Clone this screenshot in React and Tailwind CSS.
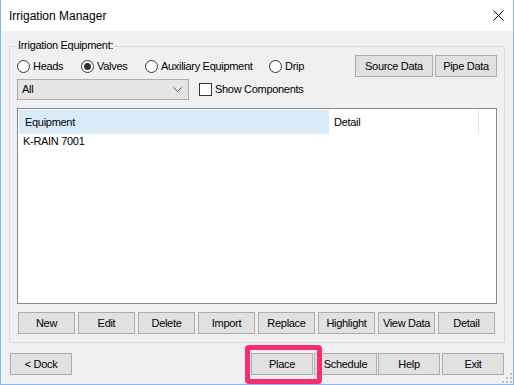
import React from "react";

const Btn = ({ children, className = "" }) => (
  <div
    className={
      "h-[22px] flex items-center justify-center bg-[#e1e1e1] border border-[#adadad] text-[11px] text-black " +
      className
    }
  >
    {children}
  </div>
);

const Radio = ({ label, checked, className = "" }) => (
  <div className={"flex items-center " + className}>
    <div className="w-[13px] h-[13px] rounded-full border border-[#333333] bg-white flex items-center justify-center shrink-0">
      {checked && <div className="w-[7px] h-[7px] rounded-full bg-[#333333]" />}
    </div>
    <span className="ml-[3px]">{label}</span>
  </div>
);

export default function App() {
  return (
    <div className="w-[514px] h-[385px] bg-[#f0f0f0] border-x border-b border-[#8ab6e8] flex flex-col font-['Liberation_Sans',Arial,sans-serif] text-[11px] tracking-[-0.3px] text-black relative overflow-hidden">
      {/* Title bar */}
      <div className="h-[31px] bg-white flex items-center justify-between pl-[8px] pr-[9px] shrink-0">
        <span className="text-[12px] tracking-normal">Irrigation Manager</span>
        <svg width="11" height="11" viewBox="0 0 11 11">
          <path d="M0.5 0.5 L10.5 10.5 M10.5 0.5 L0.5 10.5" stroke="#000" strokeWidth="1" />
        </svg>
      </div>

      {/* Group box */}
      <div className="relative mt-[15px] ml-[8px] w-[496px] h-[297px] border border-[#dcdcdc] rounded-[2px] flex flex-col shrink-0">
        <span className="absolute left-[7px] top-[-8px] bg-[#f0f0f0] px-[1px] leading-[13px]">
          Irrigation Equipment:
        </span>

        {/* Row 1 */}
        <div className="mt-[8px] h-[22px] flex items-center pl-[7px] pr-[7px]">
          <Radio label="Heads" className="w-[64px]" />
          <Radio label="Valves" checked className="w-[64px]" />
          <Radio label="Auxiliary Equipment" className="w-[124px]" />
          <Radio label="Drip" />
          <div className="flex-1" />
          <Btn className="w-[78px]">Source Data</Btn>
          <Btn className="w-[62px] ml-[2px]">Pipe Data</Btn>
        </div>

        {/* Row 2 */}
        <div className="mt-[2px] h-[21px] flex items-center pl-[7px]">
          <div className="w-[172px] h-[21px] bg-[#e5e5e5] border border-[#acacac] flex items-center justify-between pl-[4px] pr-[6px]">
            <span>All</span>
            <svg width="9" height="5" viewBox="0 0 9 5">
              <path d="M0.5 0.5 L4.5 4.5 L8.5 0.5" stroke="#555" strokeWidth="1" fill="none" />
            </svg>
          </div>
          <div className="ml-[10px] w-[13px] h-[13px] border border-[#333333] bg-white" />
          <span className="ml-[3px]">Show Components</span>
        </div>

        {/* List */}
        <div className="mt-[8px] ml-[7px] w-[480px] h-[196px] border border-[#828790] bg-white pt-[1px] pl-[1px]">
          <div className="flex h-[24px]">
            <div className="w-[310px] bg-[#d9ebf9] flex items-center pl-[6px]">Equipment</div>
            <div className="w-[149px] flex items-center pl-[5px]">Detail</div>
            <div className="w-[1px] bg-[#e5e5e5]" />
          </div>
          <div className="h-[15px] flex items-center pl-[4px]">K-RAIN 7001</div>
        </div>

        {/* Button row */}
        <div className="mt-[8px] ml-[8px] flex gap-[3px]">
          {["New", "Edit", "Delete", "Import", "Replace", "Highlight", "View Data", "Detail"].map((t) => (
            <Btn key={t} className="w-[57px]">
              {t}
            </Btn>
          ))}
        </div>
      </div>

      {/* Bottom row */}
      <div className="mt-[10px] h-[22px] flex items-center relative">
        <Btn className="w-[62px] ml-[9px]">&lt; Dock</Btn>
        <div className="flex-1" />
        <Btn className="w-[62px]">Place</Btn>
        <Btn className="w-[63px] ml-[1px]">Schedule</Btn>
        <Btn className="w-[62px] ml-[1px]">Help</Btn>
        <Btn className="w-[62px] ml-[2px] mr-[9px]">Exit</Btn>
      </div>

      {/* Highlight box */}
      <div className="absolute left-[244px] top-[345px] w-[77px] h-[39px] border-[5px] border-[#f92d6d] rounded-[4px]" />

      {/* Resize grip */}
      <svg className="absolute right-[1px] bottom-[1px]" width="10" height="10" viewBox="0 0 10 10">
        <rect x="8" y="0" width="2" height="2" fill="#bdbdbd" />
        <rect x="4" y="4" width="2" height="2" fill="#bdbdbd" />
        <rect x="8" y="4" width="2" height="2" fill="#bdbdbd" />
        <rect x="0" y="8" width="2" height="2" fill="#bdbdbd" />
        <rect x="4" y="8" width="2" height="2" fill="#bdbdbd" />
        <rect x="8" y="8" width="2" height="2" fill="#bdbdbd" />
      </svg>
    </div>
  );
}
